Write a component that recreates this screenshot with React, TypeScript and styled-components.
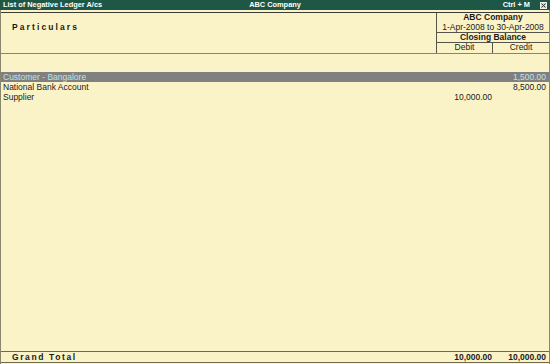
import React from "react";
import styled, { createGlobalStyle } from "styled-components";

const Global = createGlobalStyle`
  html, body { margin: 0; padding: 0; background: #faf3c8; }
  body { font-family: "Liberation Sans", Arial, sans-serif; }
`;

const Screen = styled.div`
  width: 550px;
  height: 364px;
  display: flex;
  flex-direction: column;
  background: #faf3c8;
  color: #1a1a1a;
  font-size: 8.5px;
  overflow: hidden;
`;

const TitleBar = styled.div`
  height: 10px;
  flex: none;
  background: #1e5746;
  color: #ffffff;
  font-weight: bold;
  display: grid;
  grid-template-columns: 1fr auto 1fr;
  align-items: center;
  padding: 0 3px 0 3px;
  line-height: 10px;
  font-size: 7.4px;
`;

const TitleRight = styled.div`
  display: flex;
  justify-content: flex-end;
  align-items: center;
  gap: 10px;
`;

const CloseBox = styled.span`
  width: 7px;
  height: 7px;
  background: #d8d8d8;
  border: 1px solid #f0f0f0;
  display: flex;
  align-items: center;
  justify-content: center;
  box-sizing: border-box;
`;

const Body = styled.div`
  flex: 1;
  display: flex;
  flex-direction: column;
  border-left: 1px solid #8a866c;
  border-right: 1px solid #8a866c;
  padding-top: 2px;
`;

const Header = styled.div`
  display: flex;
  height: 40px;
  border-top: 1px solid #3c3c34;
  border-bottom: 1px solid #8a866c;
  flex: none;
`;

const ParticularsHead = styled.div`
  flex: 1;
  padding: 9px 0 0 11px;
  font-weight: bold;
  letter-spacing: 2.1px;
  font-size: 8.5px;
`;

const ColGroup = styled.div`
  width: 112px;
  border-left: 1px solid #55534a;
  display: flex;
  flex-direction: column;
  text-align: center;
`;

const GroupLine = styled.div<{ $bold?: boolean; $divided?: boolean }>`
  height: 10px;
  line-height: 9px;
  font-weight: ${(p) => (p.$bold ? "bold" : "normal")};
  border-bottom: ${(p) => (p.$divided ? "1px solid #55534a" : "none")};
  box-sizing: border-box;
`;

const SplitLine = styled.div`
  display: grid;
  grid-template-columns: 56px 1fr;
  flex: 1;
  line-height: 9px;
`;

const SplitCell = styled.div<{ $divider?: boolean }>`
  text-align: center;
  border-right: ${(p) => (p.$divider ? "1px solid #55534a" : "none")};
`;

const Rows = styled.div`
  flex: 1;
  padding-top: 18px;
  display: flex;
  flex-direction: column;
`;

const Row = styled.div<{ $selected?: boolean }>`
  display: grid;
  grid-template-columns: 1fr 56px 56px;
  height: 10px;
  line-height: 10px;
  background: ${(p) => (p.$selected ? "#808080" : "transparent")};
  color: ${(p) => (p.$selected ? "#bfe3e3" : "#1a1a1a")};
`;

const Name = styled.div`
  padding-left: 2px;
  white-space: nowrap;
`;

const Amount = styled.div<{ $credit?: boolean }>`
  text-align: right;
  padding-right: ${(p) => (p.$credit ? "3px" : "1px")};
`;

const Footer = styled.div`
  flex: none;
  display: grid;
  grid-template-columns: 1fr 56px 56px;
  height: 10px;
  line-height: 10px;
  border-top: 1px solid #6e6a52;
  border-bottom: 1px solid #6e6a52;
  font-weight: bold;
  margin-bottom: 1px;
`;

const TotalLabel = styled.div`
  padding-left: 11px;
  letter-spacing: 1.6px;
`;

const rows = [
  { name: "Customer - Bangalore", debit: "", credit: "1,500.00", selected: true },
  { name: "National Bank Account", debit: "", credit: "8,500.00" },
  { name: "Supplier", debit: "10,000.00", credit: "" },
];

export default function App() {
  return (
    <>
      <Global />
      <Screen>
        <TitleBar>
          <span>List of Negative Ledger A/cs</span>
          <span>ABC Company</span>
          <TitleRight>
            <span>Ctrl + M</span>
            <CloseBox>
              <svg width="5" height="5" viewBox="0 0 5 5">
                <path d="M0.5 0.5 L4.5 4.5 M4.5 0.5 L0.5 4.5" stroke="#333" strokeWidth="1" />
              </svg>
            </CloseBox>
          </TitleRight>
        </TitleBar>
        <Body>
          <Header>
            <ParticularsHead>Particulars</ParticularsHead>
            <ColGroup>
              <GroupLine $bold>ABC Company</GroupLine>
              <GroupLine $divided>1-Apr-2008 to 30-Apr-2008</GroupLine>
              <GroupLine $bold $divided>Closing Balance</GroupLine>
              <SplitLine>
                <SplitCell $divider>Debit</SplitCell>
                <SplitCell>Credit</SplitCell>
              </SplitLine>
            </ColGroup>
          </Header>
          <Rows>
            {rows.map((r) => (
              <Row key={r.name} $selected={r.selected}>
                <Name>{r.name}</Name>
                <Amount>{r.debit}</Amount>
                <Amount $credit>{r.credit}</Amount>
              </Row>
            ))}
          </Rows>
          <Footer>
            <TotalLabel>Grand Total</TotalLabel>
            <Amount>10,000.00</Amount>
            <Amount $credit>10,000.00</Amount>
          </Footer>
        </Body>
      </Screen>
    </>
  );
}
